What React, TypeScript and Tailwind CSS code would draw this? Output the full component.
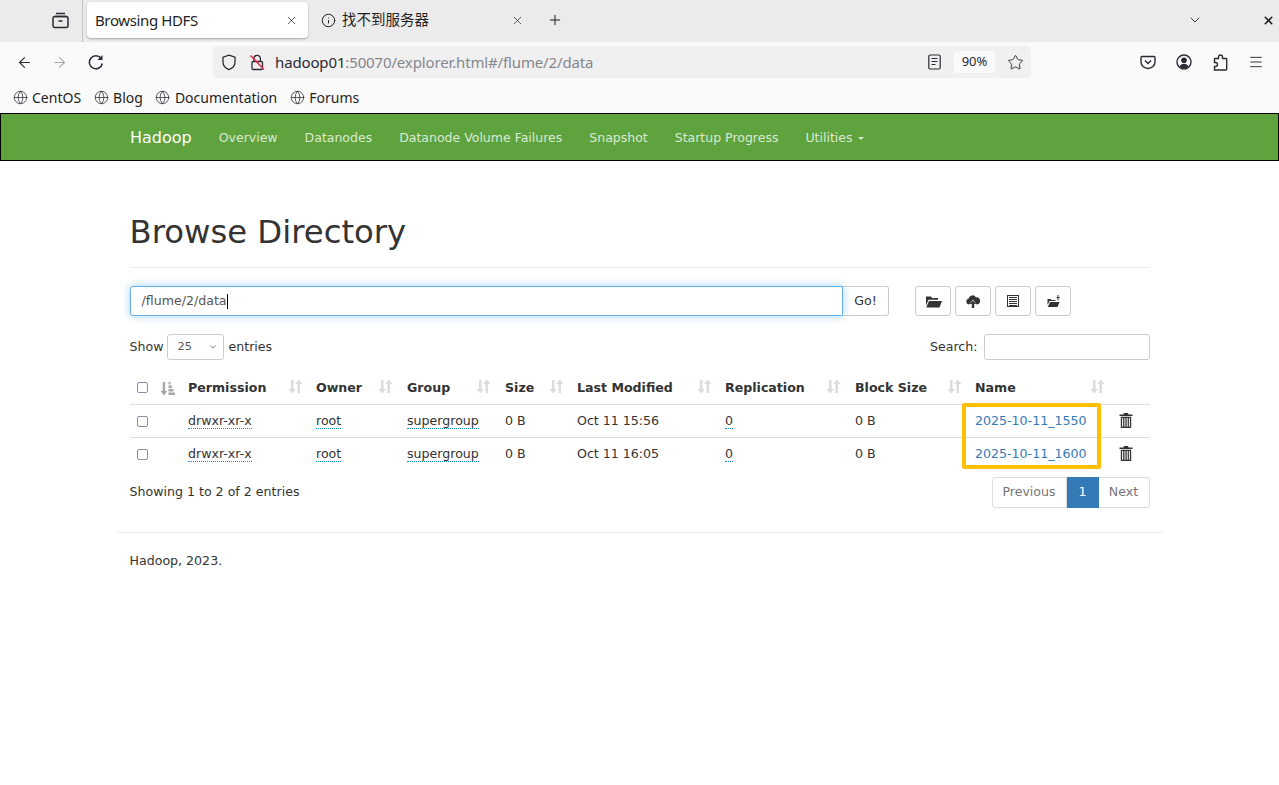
import React from "react";
import { ArrowLeft, ArrowRight, Globe, X, Plus, ChevronDown, Info, Star, Menu } from "lucide-react";

const ui = "font-['Noto_Sans','Noto_Sans_CJK_SC',sans-serif]";

function SortBoth() {
  return (
    <svg width="15" height="15" viewBox="0 0 15 15" className="text-[#dcdcdc]" fill="currentColor">
      <path d="M3 1h2.500v9H8l-3.750 4.500L.5 10H3z" />
      <path d="M9.500 14H12V5h2.500L10.750.5 7 5h2.500z" />
    </svg>
  );
}

function SortAsc() {
  return (
    <svg width="15" height="15" viewBox="0 0 15 15" className="text-[#a6a6a6]" fill="currentColor">
      <path d="M2.700 1h2.400v9h2.200L3.900 14.500.5 10h2.200z" />
      <path d="M8.500 1h2v2.500h-2zM8.500 4.500h3.500V7H8.500zM8.500 8h5v2.500h-5zM8.500 11.500H15V14H8.500z" />
    </svg>
  );
}

function Trash() {
  return (
    <svg width="14" height="15" viewBox="0 0 14 15" fill="#333">
      <path d="M5 0h4l.6 1.500H13.500v1.500H.5V1.500h3.900zM1.800 3.800h10.400V15H1.800zm1.300 1.200v8.800h1V5zm2.300 0v8.800h1V5zm2.300 0v8.800h1V5zm2.200 0v8.800h1V5z" fillRule="evenodd" />
    </svg>
  );
}

function HeadCell({ children, right }: { children: React.ReactNode; right: string }) {
  return (
    <th className="relative text-left font-bold px-2 pt-[2px] h-[33px] border-b border-[#dddddd] text-[#333333]">
      {children}
      <span className={`absolute top-[8px] ${right}`}><SortBoth /></span>
    </th>
  );
}

function Abbr({ children }: { children: React.ReactNode }) {
  return <span className="border-b border-dotted border-[#0a8fd8] leading-[14px] inline-block">{children}</span>;
}

function Row({ name, time }: { name: string; time: string }) {
  return (
    <tr className="h-[33px] border-b border-[#dddddd] last:border-b-0 text-[#333333]">
      <td className="px-[7px] pt-[1px]"><span className="block w-[11px] h-[11px] border border-[#8f8f9d] rounded-[2px] bg-white" /></td>
      <td />
      <td className="px-2 pt-[2px]"><Abbr>drwxr-xr-x</Abbr></td>
      <td className="px-2 pt-[2px]"><Abbr>root</Abbr></td>
      <td className="px-2 pt-[2px]"><Abbr>supergroup</Abbr></td>
      <td className="px-2 pt-[2px]">0 B</td>
      <td className="px-2 pt-[2px]">{time}</td>
      <td className="px-2 pt-[2px]"><Abbr>0</Abbr></td>
      <td className="px-2 pt-[2px]">0 B</td>
      <td className="px-2 pt-[2px] text-[#337ab7]">{name}</td>
      <td className="pl-[9px]"><Trash /></td>
    </tr>
  );
}

function ToolBtn({ children }: { children: React.ReactNode }) {
  return <div className="w-9 h-[30px] border border-[#cccccc] rounded-[3px] bg-white flex items-center justify-center text-[#333333]">{children}</div>;
}

function Bookmark({ label }: { label: string }) {
  return (
    <div className="flex items-center gap-[4.5px]">
      <Globe size={15} strokeWidth={1.2} className="text-[#2b2a33]" />
      <span>{label}</span>
    </div>
  );
}

export default function App() {
  return (
    <div className="min-h-[785px] bg-white overflow-hidden flex flex-col">
      {/* tab strip */}
      <div className={`${ui} h-[42px] bg-[#ebebeb] flex items-start text-[#1f1f24] shrink-0`}>
        <div className="w-[83px] h-[42px] border-r border-[#c4c4c4] mr-[4px] pl-[52px] pt-[11px] shrink-0">
          <svg width="17" height="18" viewBox="0 0 17 18" fill="none" stroke="#2b2a33" strokeWidth="1.5">
            <path d="M4 2.500h9M2.500 5.500h12" />
            <rect x="1" y="5.500" width="15" height="11" rx="2" />
            <path d="M6.500 10h4" />
          </svg>
        </div>
        <div className="h-[40px] flex-1 flex items-center">
          <div className="w-[221px] h-[36px] bg-white rounded-[4px] shadow-[0_1px_2px_rgba(0,0,0,0.3)] flex items-center justify-between pl-[8px] pr-[10px] shrink-0">
            <span className="text-[15px] tracking-[-0.38px]">Browsing HDFS</span>
            <X size={13} strokeWidth={1.3} />
          </div>
          <div className="w-[227px] flex items-center pl-[13px] pr-[11px] justify-between shrink-0">
            <div className="flex items-center gap-[6px]">
              <Info size={15} strokeWidth={1.6} />
              <span className="text-[14.5px]">找不到服务器</span>
            </div>
            <X size={13} strokeWidth={1.3} />
          </div>
          <Plus size={16} strokeWidth={1.5} className="ml-[12px]" />
          <div className="flex-1" />
          <ChevronDown size={16} strokeWidth={1.3} className="mr-[59px]" />
          <X size={13} strokeWidth={3} className="mr-[4px]" />
        </div>
      </div>
      {/* nav bar */}
      <div className={`${ui} h-[40px] bg-[#fafafa] flex items-center shrink-0 text-[#2b2a33]`}>
        <div className="w-[213px] flex items-center gap-[18px] pl-[16px]">
          <ArrowLeft size={17} strokeWidth={1.5} />
          <ArrowRight size={17} strokeWidth={1.5} className="text-[#a9a9ad]" />
          <svg width="16" height="16" viewBox="0 0 16 16" fill="none" stroke="#2b2a33" strokeWidth="1.5" className="ml-[2px]">
            <path d="M13 4.200A6.500 6.500 0 1014.300 9.500" />
            <path d="M14.500 1v5h-5z" fill="#2b2a33" stroke="none" />
          </svg>
        </div>
        <div className="w-[818px] h-[32px] bg-[#f0f0f0] rounded-[4px] flex items-center">
          <svg width="16" height="17" viewBox="0 0 16 17" className="ml-[8px]" fill="none" stroke="#2b2a33" strokeWidth="1.3">
            <path d="M8 1.200l6 2v5c0 3.500-2.600 6-6 7.500-3.400-1.500-6-4-6-7.500v-5z" />
          </svg>
          <svg width="16" height="17" viewBox="0 0 16 17" className="ml-[12px]" fill="none" stroke="#2b2a33" strokeWidth="1.300">
            <rect x="3" y="7.500" width="10.500" height="8" rx="1.200" />
            <path d="M5 7.500V4.500a3.200 3.200 0 016.400 0V7.500" />
            <path d="M1.500 1.500l13.500 14" stroke="#e22850" strokeWidth="1.500" />
          </svg>
          <span className="ml-[10px] text-[15px] tracking-[-0.14px]">hadoop01<span className="text-[#85858c]">:50070/explorer.html#/flume/2/data</span></span>
          <div className="flex-1" />
          <svg width="13" height="16" viewBox="0 0 13 16" className="mr-[13px]" fill="none" stroke="#2b2a33" strokeWidth="1.2">
            <rect x=".8" y="1" width="11.400" height="14" rx="1.500" />
            <path d="M3.500 4.500h6M3.500 7.500h6M3.500 10.500h4" />
          </svg>
          <div className="w-[41px] h-[22px] bg-[#fafafa] rounded-[3px] flex items-center justify-center text-[13px]">90%</div>
          <Star size={17} strokeWidth={1.3} className="ml-[12px] mr-[7px]" />
        </div>
        <div className="flex-1 flex items-center">
          <svg width="16" height="16" viewBox="0 0 16 16" className="ml-[109px]" fill="none" stroke="#2b2a33" strokeWidth="1.4">
            <path d="M2 2.500h12a1 1 0 011 1V8a7 6.500 0 01-14 0V3.500a1 1 0 011-1z" />
            <path d="M5 6.500l3 3 3-3" />
          </svg>
          <svg width="16" height="16" viewBox="0 0 16 16" className="ml-[20px]" fill="none" stroke="#2b2a33" strokeWidth="1.400">
            <circle cx="8" cy="8" r="7" />
            <circle cx="8" cy="6.200" r="2.800" fill="#2b2a33" stroke="none" />
            <path d="M3.500 12.500c1-2 2.500-2.800 4.500-2.800s3.500.8 4.500 2.800c-1.200 1.300-2.700 2-4.500 2s-3.300-.7-4.500-2z" fill="#2b2a33" stroke="none" />
          </svg>
          <svg width="16" height="17" viewBox="0 0 16 17" className="ml-[20px]" fill="none" stroke="#2b2a33" strokeWidth="1.400">
            <path d="M6.500 4.500V3a2 2 0 014 0v1.500h3.500a.7.7 0 01.7.7v10.100a.7.700 0 01-.7.700H2.500v-3.500h1a2 2 0 000-4h-1V5.200a.7.700 0 01.7-.7z" />
          </svg>
          <Menu size={16} strokeWidth={1.4} className="ml-[20px]" />
        </div>
      </div>
      {/* bookmarks */}
      <div className={`${ui} h-[31px] bg-[#fafafa] flex items-center gap-[12.5px] pl-[12.5px] text-[14px] text-[#1f1f24] shrink-0`}>
        <Bookmark label="CentOS" />
        <Bookmark label="Blog" />
        <Bookmark label="Documentation" />
        <Bookmark label="Forums" />
      </div>
      {/* page */}
      <div className="font-['DejaVu_Sans',sans-serif] text-[12.6px] text-[#333333]">
        <div className="h-[48px] bg-[#5fa33e] border border-black flex items-center pl-[129px] pt-px text-[#dbe9d3]">
          <span className="text-[16px] text-white mr-[27px]">Hadoop</span>
          <div className="flex items-center gap-[27px] text-[12.5px] mt-px">
            <span>Overview</span>
            <span>Datanodes</span>
            <span>Datanode Volume Failures</span>
            <span>Snapshot</span>
            <span>Startup Progress</span>
            <span className="flex items-center gap-[6px]">Utilities<span className="w-0 h-0 border-x-[3px] border-x-transparent border-t-[3px] border-t-[#dbe9d3]" /></span>
          </div>
        </div>
        <div className="w-[1048px] ml-[116px] pl-[13.5px] pr-[14.5px]">
          <h1 className="mt-[51px] text-[32.3px] leading-[40px] text-[#333333] border-b border-[#eeeeee] h-[56px]">Browse Directory</h1>
          <div className="mt-[18px] flex items-center h-[30px]">
            <div className="w-[713.5px] h-[30px] border border-[#66afe9] rounded-l-[3px] shadow-[0_0_8px_rgba(102,175,233,0.6)] flex items-center pl-[11px] pt-px text-[12.6px] text-[#555555] bg-white">
              /flume/2/data<span className="w-px h-[15px] bg-black" />
            </div>
            <div className="w-[46px] h-[30px] border border-[#cccccc] border-l-0 rounded-r-[3px] flex items-center justify-center pt-px">Go!</div>
            <div className="ml-[26px] flex gap-[4px]">
              <ToolBtn>
                <svg width="17" height="13" viewBox="0 0 17 13" fill="#333"><path d="M1 1.500h5l1 1.500h6V4.800H3.500L1 10.500zM4 6h13l-2.500 6.500H1.200z" /></svg>
              </ToolBtn>
              <ToolBtn>
                <svg width="14" height="13" viewBox="0 0 14 13" fill="#333"><path d="M3 9.500a3 3 0 01-.4-5.900A4 4 0 0110 2.400a3.500 3.500 0 011 7h-.3L7 4.500 3.300 9.500z" /><path d="M7 5.500L10.200 9H8.200v4H5.800V9H3.800z" /></svg>
              </ToolBtn>
              <ToolBtn>
                <svg width="12" height="12" viewBox="0 0 12 12" fill="none" stroke="#333"><rect x=".5" y=".5" width="11" height="11" /><path d="M2 2.500h8M2 4.500h8M2 6.500h8M2 8.500h8M2 10.500h8" /></svg>
              </ToolBtn>
              <ToolBtn>
                <svg width="13" height="12" viewBox="0 0 13 12" fill="#333"><path d="M.5 4h3l1 1h4v1H2.500L.5 10zM3 7h9.500l-2 5H.8z" /><path d="M9.500 2h1V0h1v2h1.300v1h-1.300v2.200h-1V3h-1z" /></svg>
              </ToolBtn>
            </div>
          </div>
          <div className="mt-[18px] flex items-center justify-between h-[26px]">
            <div className="flex items-center">
              <span>Show</span>
              <div className="w-[57px] h-[26px] ml-[4px] mr-[4px] border border-[#cccccc] rounded-[3px] flex items-center justify-between pl-[9px] pr-[5px] text-[11.3px] text-[#555555]">
                25<ChevronDown size={10} strokeWidth={1.8} />
              </div>
              <span>entries</span>
            </div>
            <div className="flex items-center">
              <span>Search:</span>
              <div className="w-[166px] h-[26px] ml-[6px] border border-[#cccccc] rounded-[3px]" />
            </div>
          </div>
          <div className="relative mt-[11px] pl-[0.5px]">
            <table className="w-[1019.5px] table-fixed border-collapse">
              <colgroup>
                <col className="w-[30px]" />
                <col className="w-[20px]" />
                <col className="w-[128px]" />
                <col className="w-[91px]" />
                <col className="w-[98px]" />
                <col className="w-[72px]" />
                <col className="w-[148px]" />
                <col className="w-[130px]" />
                <col className="w-[120px]" />
                <col className="w-[143px]" />
                <col className="w-[39.5px]" />
              </colgroup>
              <thead>
                <tr>
                  <th className="px-[7px] pt-[1px] h-[33px] border-b border-[#dddddd]"><span className="block w-[11px] h-[11px] border border-[#8f8f9d] rounded-[2px] bg-white" /></th>
                  <th className="border-b border-[#dddddd] pt-[2px]"><SortAsc /></th>
                  <HeadCell right="right-[5px]">Permission</HeadCell>
                  <HeadCell right="right-[6px]">Owner</HeadCell>
                  <HeadCell right="right-[6px]">Group</HeadCell>
                  <HeadCell right="right-[5px]">Size</HeadCell>
                  <HeadCell right="right-[5px]">Last Modified</HeadCell>
                  <HeadCell right="right-[6px]">Replication</HeadCell>
                  <HeadCell right="right-[5px]">Block Size</HeadCell>
                  <HeadCell right="right-[5px]">Name</HeadCell>
                  <th className="border-b border-[#dddddd]" />
                </tr>
              </thead>
              <tbody>
                <Row name="2025-10-11_1550" time="Oct 11 15:56" />
                <Row name="2025-10-11_1600" time="Oct 11 16:05" />
              </tbody>
            </table>
            <div className="absolute left-[832.5px] top-[32px] w-[139px] h-[66px] border-[4px] border-[#ffc000] rounded-[2px]" />
          </div>
          <div className="mt-[7px] flex items-start justify-between">
            <span className="mt-[6px]">Showing 1 to 2 of 2 entries</span>
            <div className="flex h-[31px] text-[#777777]">
              <div className="w-[75px] border border-[#dddddd] rounded-l-[3px] flex items-center justify-center">Previous</div>
              <div className="w-[32px] bg-[#337ab7] text-white flex items-center justify-center">1</div>
              <div className="w-[51px] border border-[#dddddd] border-l-0 rounded-r-[3px] flex items-center justify-center">Next</div>
            </div>
          </div>
        </div>
        <div className="w-[1048px] ml-[116px] mt-[24px] border-t border-[#eeeeee] pl-[13.5px] pt-[19px]">Hadoop, 2023.</div>
      </div>
    </div>
  );
}
